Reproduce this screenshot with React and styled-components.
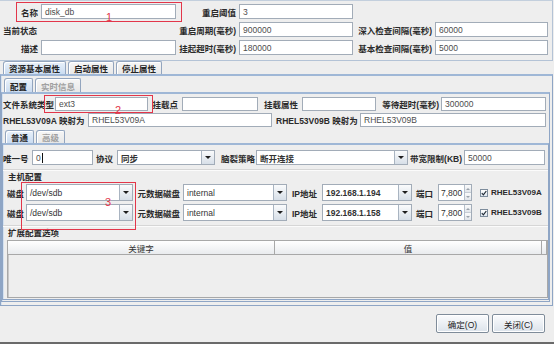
import React from 'react';
import styled, { createGlobalStyle } from 'styled-components';

const Global = createGlobalStyle`
  html, body { margin: 0; padding: 0; background: #eeeeee; }
  body { font-family: "Liberation Sans", "Noto Sans CJK SC", sans-serif; }
  #root { width: 554px; height: 344px; }
`;

const Window = styled.div`
  position: relative;
  width: 554px;
  height: 344px;
  box-sizing: border-box;
  background: #eeeeee;
  display: flex;
  flex-direction: column;
  border-bottom: 2px solid #6a6a6a;
  font-size: 8.5px;
  color: #222;
  overflow: hidden;
`;

const TopPanel = styled.div`
  height: 61px;
  flex: none;
  box-sizing: border-box;
  margin-right: 1px;
  padding: 3px 0 0 3px;
  border-top: 1px solid #c3cfdd;
  border-right: 1px solid #b4c3d6;
  border-bottom: 1px solid #b4c3d6;
  display: grid;
  grid-template-columns: 35px 135px 57px 114px 76px 113px;
  grid-auto-rows: 15px;
  column-gap: 3px;
  row-gap: 3px;
  align-content: start;
`;

const Label = styled.div`
  display: flex;
  align-items: center;
  justify-content: ${p => (p.$align === 'right' ? 'flex-end' : 'flex-start')};
  padding-left: ${p => p.$pl || 0}px;
  padding-right: ${p => p.$pr || 0}px;
  font-size: 8.5px;
  font-weight: bold;
  color: #2a2a2a;
  white-space: nowrap;
  overflow: visible;
  min-width: 0;
`;

const Field = styled.div`
  box-sizing: border-box;
  height: 100%;
  background: #fff;
  border: 1px solid #a2acb8;
  padding: 0 3px;
  display: flex;
  align-items: center;
  font-size: 8.5px;
  color: #4d4d4d;
  white-space: nowrap;
  overflow: hidden;
`;

const Caret = styled.span`
  display: inline-block;
  width: 1px;
  height: 10px;
  margin-left: 1px;
  background: #111;
`;

const FormRow = styled.div`
  display: grid;
  grid-template-columns: ${p => p.$cols};
  height: ${p => p.$h}px;
  margin-top: ${p => p.$mt || 0}px;
  flex: none;
`;

const Pane = styled.div`
  display: flex;
  flex-direction: column;
  flex: ${p => (p.$grow ? 1 : 'none')};
  height: ${p => (p.$height ? `${p.$height}px` : 'auto')};
  margin: ${p => p.$m || '0'};
  min-height: 0;
`;

const TabStrip = styled.div`
  display: flex;
  gap: 2px;
  padding-left: 3px;
  height: ${p => p.$h}px;
  margin-top: ${p => p.$mt || 0}px;
  flex: none;
`;

const Tab = styled.div`
  box-sizing: border-box;
  height: 100%;
  padding: 0 5px;
  display: flex;
  align-items: center;
  border: 1px solid #93a5be;
  border-bottom: none;
  border-radius: 3px 2px 0 0;
  background: ${p => (p.$active ? 'linear-gradient(#e9f1fa, #cbdcf1)' : 'linear-gradient(#f6f6f6, #e8e8e8)')};
  box-shadow: inset 1px 1px 0 #ffffff;
  color: ${p => (p.$disabled ? '#a0a0a0' : '#252525')};
  font-size: 8.5px;
  font-weight: bold;
  white-space: nowrap;
`;

const PaneBody = styled.div`
  flex: 1;
  min-height: 0;
  display: flex;
  flex-direction: column;
  box-sizing: border-box;
  border: 1px solid #8ea5c5;
  border-top: 2px solid #9fb7d6;
  box-shadow: inset 1px 0 0 #d4e1f0;
  padding: ${p => p.$pad || '0'};
`;

const Combo = styled.div`
  box-sizing: border-box;
  height: 100%;
  display: flex;
  background: #fff;
  border: 1px solid #a2acb8;
  min-width: 0;
`;

const ComboText = styled.div`
  flex: 1;
  display: flex;
  align-items: center;
  padding: 0 3px;
  font-size: 8.5px;
  font-weight: ${p => (p.$bold ? 'bold' : 'normal')};
  color: #333;
  white-space: nowrap;
  overflow: hidden;
`;

const ComboButton = styled.div`
  width: 12px;
  flex: none;
  border-left: 1px solid #a9b4c1;
  background: linear-gradient(#fafbfc, #d7dfe8);
  display: flex;
  align-items: center;
  justify-content: center;
  &::after {
    content: '';
    border-left: 3px solid transparent;
    border-right: 3px solid transparent;
    border-top: 3px solid #1e1e1e;
  }
`;

const GroupTitle = styled.div`
  flex: none;
  height: ${p => p.$h}px;
  margin-top: ${p => p.$mt || 0}px;
  padding-left: 5px;
  display: flex;
  align-items: center;
  font-weight: bold;
  color: #2a2a2a;
  border-top: 1px solid #d6d6d6;
  box-shadow: inset 0 1px 0 #fbfbfb;
`;

const Spinner = styled.div`
  box-sizing: border-box;
  height: 100%;
  display: flex;
  border: 1px solid #a2acb8;
  background: #fff;
`;

const SpinText = styled.div`
  flex: 1;
  display: flex;
  align-items: center;
  padding: 0 2px;
  font-size: 8.5px;
  color: #333;
`;

const SpinButtons = styled.div`
  width: 9px;
  display: flex;
  flex-direction: column;
  border-left: 1px solid #b7c0cb;
`;

const SpinButton = styled.div`
  flex: 1;
  background: linear-gradient(#fbfbfb, #e2e6eb);
  border-bottom: ${p => (p.$top ? '1px solid #c5ccd4' : 'none')};
  display: flex;
  align-items: center;
  justify-content: center;
  &::after {
    content: '';
    border-left: 2px solid transparent;
    border-right: 2px solid transparent;
    ${p => (p.$top ? 'border-bottom: 2px solid #9aa2ab;' : 'border-top: 2px solid #9aa2ab;')}
  }
`;

const CheckCell = styled.div`
  display: flex;
  align-items: center;
  gap: 3px;
  padding-left: 8px;
  font-size: 8px;
  font-weight: bold;
  color: #2a2a2a;
  white-space: nowrap;
`;

const CheckBox = styled.div`
  width: 8px;
  height: 8px;
  box-sizing: border-box;
  border: 1px solid #7d8c9c;
  background: linear-gradient(#ffffff, #dfe6ee);
  display: flex;
  align-items: center;
  justify-content: center;
`;

const HostRows = styled.div`
  display: flex;
  flex-direction: column;
  gap: 3px;
  margin-top: 2px;
  flex: none;
`;

const TableBox = styled.div`
  flex: 1;
  margin: 2px 0 1px 4px;
  display: flex;
  flex-direction: column;
  border: 1px solid #a8a8a8;
  background: #eeeeee;
  box-shadow: inset 1px 1px 0 #c8c8c8;
  min-height: 0;
`;

const TableHeader = styled.div`
  display: grid;
  grid-template-columns: 267px 1fr 5px;
  height: 14px;
  flex: none;
`;

const HeaderCell = styled.div`
  display: flex;
  align-items: center;
  justify-content: center;
  border-right: 1px solid #a8a8a8;
  border-bottom: 1px solid #a8a8a8;
  background: linear-gradient(#ffffff, #e9ebee);
  color: #333;
  font-size: 8.5px;
`;

const Footer = styled.div`
  flex: 1;
  display: flex;
  justify-content: flex-end;
  align-items: flex-start;
  gap: 3px;
  padding: 8px 9px 0 0;
`;

const Button = styled.button`
  width: 53px;
  height: 19px;
  padding: 0;
  border: 1px solid #7f8c9a;
  border-radius: 2px;
  background: linear-gradient(#fbfcfd, #dce3eb);
  box-shadow: inset 0 0 0 1px #ffffff;
  font-family: "Liberation Sans", "Noto Sans CJK SC", sans-serif;
  font-size: 8.5px;
  color: #222;
`;

const Annot = styled.div`
  position: absolute;
  left: ${p => p.$x}px;
  top: ${p => p.$y}px;
  width: ${p => p.$w}px;
  height: ${p => p.$h}px;
  box-sizing: border-box;
  border: 1px solid #e2364a;
  pointer-events: none;
`;

const AnnotNum = styled.div`
  position: absolute;
  left: ${p => p.$x}px;
  top: ${p => p.$y}px;
  font-family: "Liberation Sans", sans-serif;
  font-size: 11px;
  line-height: 11px;
  color: #e2364a;
  pointer-events: none;
`;

const ComboBox = ({ value, bold }) => (
  <Combo>
    <ComboText $bold={bold}>{value}</ComboText>
    <ComboButton />
  </Combo>
);

const Check = () => (
  <CheckBox>
    <svg width="6" height="6" viewBox="0 0 6 6">
      <path d="M0.8 3.2 L2.4 4.8 L5.3 1" fill="none" stroke="#1f2a36" strokeWidth="1.2" />
    </svg>
  </CheckBox>
);

const HostRow = ({ ip, name }) => (
  <FormRow $cols="23px 107px 50px 104px 35px 90px 26px 34px auto" $h={17}>
    <Label $pl={4}>磁盘</Label>
    <ComboBox value="/dev/sdb" />
    <Label $align="right" $pr={3}>元数据磁盘</Label>
    <ComboBox value="internal" />
    <Label $align="right" $pr={5}>IP地址</Label>
    <ComboBox value={ip} bold />
    <Label $align="right" $pr={5}>端口</Label>
    <Spinner>
      <SpinText>7,800</SpinText>
      <SpinButtons>
        <SpinButton $top />
        <SpinButton />
      </SpinButtons>
    </Spinner>
    <CheckCell>
      <Check />
      {name}
    </CheckCell>
  </FormRow>
);

export default function App() {
  return (
    <>
      <Global />
      <Window>
        <TopPanel>
          <Label $align="right">名称</Label>
          <Field>disk_db</Field>
          <Label $align="right">重启阈值</Label>
          <Field>3</Field>
          <div />
          <div />

          <Label>当前状态</Label>
          <div />
          <Label $align="right">重启周期(毫秒)</Label>
          <Field>900000</Field>
          <Label $align="right">深入检查间隔(毫秒)</Label>
          <Field>60000</Field>

          <Label $align="right">描述</Label>
          <Field />
          <Label $align="right">挂起超时(毫秒)</Label>
          <Field>180000</Field>
          <Label $align="right">基本检查间隔(毫秒)</Label>
          <Field>5000</Field>
        </TopPanel>

        <Pane $height={245} $m="0 1px 0 0">
          <TabStrip $h={13}>
            <Tab $active>资源基本属性</Tab>
            <Tab>启动属性</Tab>
            <Tab>停止属性</Tab>
          </TabStrip>
          <PaneBody $pad="2px 2px 3px 0">
            <Pane $grow>
              <TabStrip $h={14}>
                <Tab $active>配置</Tab>
                <Tab $disabled>实时信息</Tab>
              </TabStrip>
              <PaneBody $pad="3px 0 1px 0">
                <FormRow $cols="53px 93px 34px 76px 44px 74px 65px 105px" $h={14}>
                  <Label $pl={1}>文件系统类型</Label>
                  <Field>ext3</Field>
                  <Label $align="right" $pr={4}>挂载点</Label>
                  <Field />
                  <Label $align="right" $pr={4}>挂载属性</Label>
                  <Field />
                  <Label $align="right" $pr={2}>等待超时(毫秒)</Label>
                  <Field>300000</Field>
                </FormRow>
                <FormRow $cols="86px 184px 88px 186px" $h={14} $mt={2}>
                  <Label $pl={1}>RHEL53V09A 映射为</Label>
                  <Field>RHEL53V09A</Field>
                  <Label $pl={4}>RHEL53V09B 映射为</Label>
                  <Field>RHEL53V09B</Field>
                </FormRow>
                <Pane $grow $m="3px 0 0 0">
                  <TabStrip $h={13}>
                    <Tab $active>普通</Tab>
                    <Tab $disabled>高级</Tab>
                  </TabStrip>
                  <PaneBody $pad="5px 0 0 0">
                    <FormRow $cols="29px 61px 24px 98px 41px 152px 56px 81px" $h={15}>
                      <Label>唯一号</Label>
                      <Field>
                        0<Caret />
                      </Field>
                      <Label $align="right" $pr={4}>协议</Label>
                      <ComboBox value="同步" bold />
                      <Label $align="right" $pr={1}>脑裂策略</Label>
                      <ComboBox value="断开连接" bold />
                      <Label $align="right" $pr={2}>带宽限制(KB)</Label>
                      <Field>50000</Field>
                    </FormRow>
                    <GroupTitle $h={12} $mt={4}>主机配置</GroupTitle>
                    <HostRows>
                      <HostRow ip="192.168.1.194" name="RHEL53V09A" />
                      <HostRow ip="192.168.1.158" name="RHEL53V09B" />
                    </HostRows>
                    <GroupTitle $h={12} $mt={4}>扩展配置选项</GroupTitle>
                    <TableBox>
                      <TableHeader>
                        <HeaderCell>关键字</HeaderCell>
                        <HeaderCell>值</HeaderCell>
                        <HeaderCell />
                      </TableHeader>
                    </TableBox>
                  </PaneBody>
                </Pane>
              </PaneBody>
            </Pane>
          </PaneBody>
        </Pane>

        <Footer>
          <Button>确定(O)</Button>
          <Button>关闭(C)</Button>
        </Footer>

        <Annot $x={16} $y={2} $w={166} $h={20} />
        <AnnotNum $x={106} $y={12}>1</AnnotNum>
        <Annot $x={44} $y={95} $w={109} $h={18} />
        <AnnotNum $x={115} $y={105}>2</AnnotNum>
        <Annot $x={21} $y={182} $w={115} $h={48} />
        <AnnotNum $x={105} $y={197}>3</AnnotNum>
      </Window>
    </>
  );
}
